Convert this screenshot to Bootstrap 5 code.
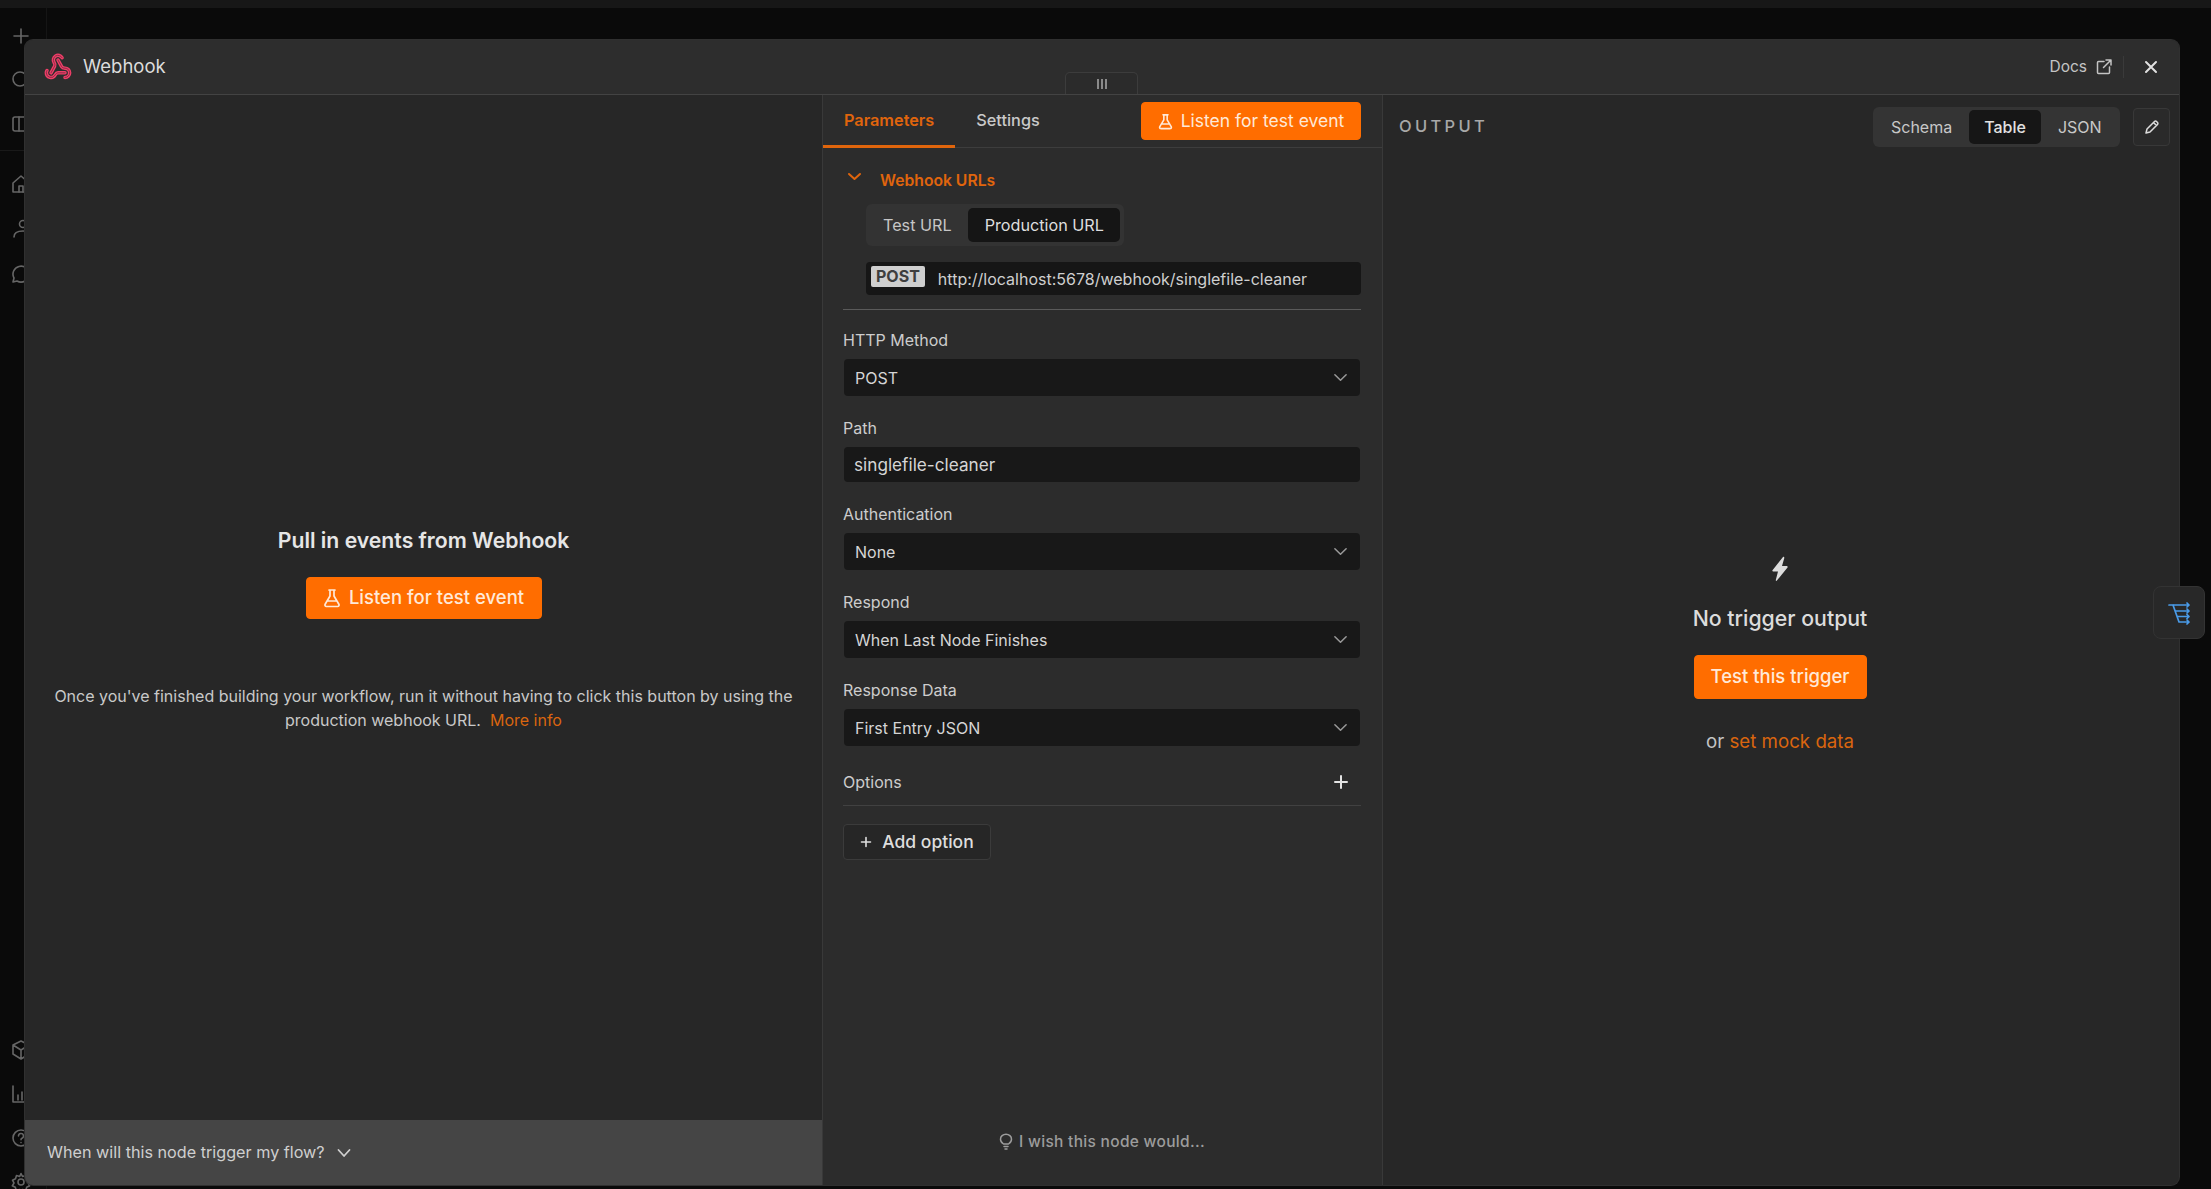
<!DOCTYPE html>
<html lang="en">
<head>
  <meta charset="UTF-8">
  <meta name="viewport" content="width=device-width, initial-scale=1.0">
  <title>Webhook</title>
  <link href="https://cdn.jsdelivr.net/npm/bootstrap@5.3.0/dist/css/bootstrap.min.css" rel="stylesheet">
  <style>
    html, body { height: 100%; }
    body {
      background-color: #0a0a0a;
      color: #d8d8d8;
      font-family: Inter, "Noto Sans", sans-serif;
      font-size: 15px;
      overflow: hidden;
      position: relative;
    }
    .top-strip { height: 8px; background: #171717; }

    /* app sidebar behind the modal */
    .app-side {
      position: absolute; left: 0; top: 8px; bottom: -3px; width: 47px;
      border-right: 1px solid #151515;
      color: #666;
      padding: 18px 0 0 11px;
    }
    .app-side svg { width: 20px; height: 20px; fill: none; stroke: currentColor; stroke-width: 1.6; stroke-linecap: round; stroke-linejoin: round; display: block; flex: none; }
    .side-group { gap: 24px; }
    .side-group-mid { gap: 25px; margin-top: 40px; }
    .side-rule { position: absolute; left: 0; right: 0; top: 142px; border-top: 1px solid #191919; }

    /* the node modal */
    .node-modal {
      position: absolute; left: 25px; top: 40px; width: 2154px; height: 1145px;
      background: #272727;
      border-radius: 8px;
      overflow: hidden;
      box-shadow: 0 0 0 1px #303030;
    }
    .modal-top {
      height: 55px; flex: none;
      background: #2d2d2d;
      border-bottom: 1px solid #434343;
      padding: 0 21px 0 19px;
      position: relative;
    }
    .node-title { font-size: 18.500px; color: #dcdcdc; margin-left: 11px; }
    .docs-link { font-size: 15.500px; color: #c4c4c4; text-decoration: none; }
    .top-sep { width: 1px; height: 22px; background: #3a3a3a; margin: 0 20px 0 10px; }
    .drag-handle {
      position: absolute; left: 1040px; bottom: 0; width: 73px; height: 22px;
      border: 1px solid #3c3c3c; border-bottom: 0; border-radius: 5px 5px 0 0;
      background: #2b2b2b;
    }
    .drag-handle span { width: 2px; height: 10px; background: #8a8a8a; margin: 0 1px; }

    .input-pane { width: 797px; flex: none; }
    .params-pane { width: 561px; flex: none; background: #2c2c2c; border-left: 1px solid #393939; border-right: 1px solid #393939; }
    .output-pane { flex: 1 1 auto; min-width: 0; }

    /* orange buttons */
    .btn-run {
      --bs-btn-bg: #ff6d00; --bs-btn-border-color: #ff6d00; --bs-btn-color: #ffe9d8;
      --bs-btn-hover-bg: #ff6d00; --bs-btn-hover-border-color: #ff6d00; --bs-btn-hover-color: #ffe9d8;
      font-size: 18.500px; font-weight: 500; border-radius: 4px; padding: 0;
    }
    .btn-listen { width: 236px; height: 42px; margin-top: 24px; }
    .btn-listen-sm { width: 220px; height: 38px; font-size: 17.500px; font-weight: 400; }
    .btn-test { width: 173px; height: 44px; }

    .pull-title { font-size: 21.200px; font-weight: 600; color: #e6e6e6; line-height: 26px; }
    .pull-note { font-size: 16px; line-height: 24px; color: #c9c9c9; width: 770px; margin-top: 65px; }
    .accent-link { color: #d9650f; text-decoration: none; }
    .input-center { padding-top: 432px; }
    .when-bar {
      height: 65px; flex: none; margin-top: auto; gap: 12px;
      background: #454545; color: #cfcfcf; font-size: 16.200px; padding-left: 22px;
    }

    /* parameter tabs */
    .params-head { height: 53px; flex: none; border-bottom: 1px solid #3d3d3d; padding-right: 21px; }
    .param-tabs .nav-link { color: #c9c9c9; font-size: 16.300px; font-weight: 500; padding: 0 21px; height: 53px; line-height: 50px; }
    .param-tabs .nav-link.active { color: #e0650c; border-bottom: 3px solid #e0650c; font-weight: 600; }
    .params-body { padding: 0 21px 0 20px; }
    .urls-title { color: #e0650c; font-size: 15.700px; font-weight: 600; line-height: 20px; margin-top: 23px; }
    .urls-chevron { margin: -9px 18px 0 4px; }
    .urls-wrap { margin-left: 23px; }
    .seg-control { background: #333; border-radius: 6px; padding: 4px 4px 4px 0; margin-top: 13px; }
    .seg-btn { border: 0; background: transparent; color: #c6c6c6; font-size: 16.200px; line-height: 34px; padding: 0 16px 0 17px; border-radius: 5px; }
    .seg-btn.on { background: #151515; color: #dedede; }
    .url-box { height: 33px; background: #161616; border-radius: 4px; margin-top: 16px; padding-left: 5px; }
    .method-tag { background: #cfcfcf; color: #3e3e3e; font-size: 16px; font-weight: 700; line-height: 21px; padding: 0 5px; border-radius: 2px; margin-top: -5px; }
    .url-text { font-size: 16px; color: #cfcfcf; margin-left: 13px; }
    .urls-rule { border-top: 1px solid #5a5a5a; margin-top: 14px; margin-bottom: 20px; }
    .field-group { margin-bottom: 22px; }
    .field-label { font-size: 16px; line-height: 20px; color: #cdcdcd; margin-bottom: 9px; display: block; }
    .field-select.form-select, .field-input.form-control {
      background-color: #181818; border: 0; border-radius: 4px; color: #d5d5d5;
      font-size: 16px; height: 37px; padding: 0 12px 0 11px; margin-left: 1px; width: calc(100% - 2px);
    }
    .field-select.form-select {
      background-image: url("data:image/svg+xml,%3csvg xmlns='http://www.w3.org/2000/svg' viewBox='0 0 16 16'%3e%3cpath fill='none' stroke='%23999' stroke-linecap='round' stroke-linejoin='round' stroke-width='1.6' d='m2 5 6 6 6-6'/%3e%3c/svg%3e");
      background-position: right 12px center; background-size: 15px 15px;
    }
    .field-input.form-control { font-size: 17.200px; height: 35px; padding-left: 10px; }
    .options-row { height: 42px; padding-bottom: 6px; border-bottom: 1px solid #414141; font-size: 16px; color: #cdcdcd; margin-top: 18px; padding-right: 12px; }
    .btn-add {
      --bs-btn-bg: #262626; --bs-btn-border-color: #3b3b3b; --bs-btn-color: #dedede;
      --bs-btn-hover-bg: #262626; --bs-btn-hover-border-color: #3b3b3b; --bs-btn-hover-color: #dedede;
      width: 148px; height: 36px; padding: 0; gap: 10px; font-size: 17.500px; font-weight: 500; border-radius: 4px; margin-top: 18px;
    }
    .wish-line { margin-top: auto; margin-bottom: 32px; gap: 6px; color: #9c9c9c; font-size: 15.500px; font-weight: 500; letter-spacing: .3px; }

    /* output */
    .output-head { padding: 10px 9px 0 16px; height: 53px; }
    .output-title { font-size: 16.500px; font-weight: 500; letter-spacing: 3.300px; color: #a8a8a8; }
    .view-switch { background: #343434; border-radius: 6px; padding: 3px; width: 247px; gap: 2px; }
    .view-btn { border: 0; background: transparent; color: #c8c8c8; font-size: 16px; line-height: 34px; padding: 0 15px; border-radius: 5px; }
    .view-btn.on { background: #161616; color: #e2e2e2; font-weight: 500; }
    .edit-btn { width: 37px; height: 38px; margin-left: 13px; border: 1px solid #383838; border-radius: 4px; background: #2a2a2a; }
    .output-center { padding: 408px 2px 0 0; }
    .empty-title { font-size: 21.300px; font-weight: 500; color: #dcdcdc; line-height: 26px; margin-top: 23px; margin-bottom: 24px; }
    .mock-line { font-size: 18.700px; color: #c4c4c4; margin-top: 30px; line-height: 26px; }

    .float-tools {
      position: absolute; left: 2153px; top: 586px; width: 52px; height: 53px;
      background: #282828; border: 1px solid #333; border-radius: 8px;
    }
  </style>
</head>
<body>
  <div class="top-strip"></div>

  <!-- app sidebar, mostly covered by the modal -->
  <div class="app-side d-flex flex-column">
    <div class="side-rule"></div>
    <div class="d-flex flex-column side-group">
      <svg viewBox="0 0 20 20"><path d="M10 3v14M3 10h14"/></svg>
      <svg viewBox="0 0 20 20"><circle cx="9" cy="9" r="7"/><path d="m14 14 4 4"/></svg>
      <svg viewBox="0 0 20 20"><rect x="2" y="3" width="16" height="14" rx="2"/><path d="M8 3v14"/></svg>
    </div>
    <div class="d-flex flex-column side-group-mid">
      <svg viewBox="0 0 20 20"><path d="M2 9l8-7 8 7v9H2z"/><path d="M8 18v-6h4v6"/></svg>
      <svg viewBox="0 0 20 20"><circle cx="12" cy="5" r="3.5"/><path d="M3 18c0-4 3-6 9-6s8 2 8 6"/></svg>
      <svg viewBox="0 0 20 20"><path d="M18 10a8 8 0 1 0-15 4l-1 4 4-1a8 8 0 0 0 12-7z"/></svg>
    </div>
    <div class="d-flex flex-column side-group mt-auto">
      <svg viewBox="0 0 20 20"><path d="M10 1l8 4v9l-8 5-8-5V5zM2 5l8 5 8-5M10 10v9"/></svg>
      <svg viewBox="0 0 20 20"><path d="M2 2v16h16M7 16v-5M11 16V8M15 16v-3"/></svg>
      <svg viewBox="0 0 20 20"><circle cx="10" cy="10" r="8"/><path d="M7.5 8a2.5 2.5 0 1 1 3.5 2.3c-.7.3-1 .8-1 1.5M10 14.5v.1"/></svg>
      <svg viewBox="0 0 20 20"><circle cx="10" cy="10" r="3"/><path d="M10 1.5l1.5 3 3.2-1 1 3.2 3 1.5-1.5 2.8 1.5 2.8-3 1.5-1 3.2-3.2-1-1.5 3-1.5-3-3.2 1-1-3.2-3-1.5L3 11 1.5 8.200l3-1.500 1-3.200 3.200 1z"/></svg>
    </div>
  </div>

  <div class="node-modal d-flex flex-column">
    <div class="modal-top d-flex align-items-center">
      <svg width="28" height="28" viewBox="0 0 24 24" fill="none" stroke-linecap="round" stroke-linejoin="round">
        <g stroke="#ee3f68" stroke-width="3">
          <path d="M18 16.98h-5.99c-1.100 0-1.950.94-2.480 1.900A4 4 0 0 1 2 17c.01-.7.2-1.400.57-2"/>
          <path d="m6 17 3.130-5.780c.53-.97.1-2.180-.5-3.100a4 4 0 1 1 6.890-4.060"/>
          <path d="m12 6 3.130 5.730C15.660 12.700 16.900 13 18 13a4 4 0 0 1 0 8"/>
        </g>
        <g stroke="#8a2a44" stroke-width=".8">
          <path d="M18 16.98h-5.99c-1.100 0-1.950.94-2.480 1.900A4 4 0 0 1 2 17c.01-.7.2-1.400.57-2"/>
          <path d="m6 17 3.130-5.780c.53-.97.1-2.180-.5-3.100a4 4 0 1 1 6.890-4.060"/>
          <path d="m12 6 3.130 5.730C15.660 12.700 16.900 13 18 13a4 4 0 0 1 0 8"/>
        </g>
      </svg>
      <span class="node-title">Webhook</span>
      <div class="drag-handle d-flex align-items-center justify-content-center"><span></span><span></span><span></span></div>
      <a class="docs-link ms-auto d-flex align-items-center gap-2" href="#">Docs
        <svg width="18" height="18" viewBox="0 0 18 18" fill="none" stroke="#c4c4c4" stroke-width="1.500" stroke-linecap="round" stroke-linejoin="round"><path d="M9 3.500H3.500a1 1 0 0 0-1 1v10a1 1 0 0 0 1 1h10a1 1 0 0 0 1-1V9M8.500 9.500 16 2M11 2h5v5"/></svg>
      </a>
      <div class="top-sep"></div>
      <svg width="14" height="14" viewBox="0 0 14 14" fill="none" stroke="#e0e0e0" stroke-width="2" stroke-linecap="round"><path d="M2 2l10 10M12 2 2 12"/></svg>
    </div>

    <div class="d-flex flex-grow-1" style="min-height:0">
      <!-- input pane -->
      <div class="input-pane d-flex flex-column align-items-center text-center">
        <div class="input-center d-flex flex-column align-items-center">
          <div class="pull-title">Pull in events from Webhook</div>
          <button class="btn btn-run btn-listen d-flex align-items-center justify-content-center gap-2" type="button">
            <svg width="18" height="20" viewBox="0 0 18 20" fill="none" stroke="#ffe9d8" stroke-width="1.700" stroke-linecap="round" stroke-linejoin="round"><path d="M6 2h6M7 2v6l-5 8.500A1.500 1.500 0 0 0 3.300 18.500h11.400a1.500 1.500 0 0 0 1.300-2L11 8V2M4.500 13h9"/></svg>
            Listen for test event
          </button>
          <div class="pull-note">Once you've finished building your workflow, run it without having to click this button by using the production webhook URL.&nbsp; <a class="accent-link" href="#">More info</a></div>
        </div>
        <div class="when-bar w-100 d-flex align-items-center">
          <span>When will this node trigger my flow?</span>
          <svg width="14" height="14" viewBox="0 0 14 14" fill="none" stroke="#cfcfcf" stroke-width="1.800" stroke-linecap="round" stroke-linejoin="round"><path d="m1.500 4 5.500 6 5.500-6"/></svg>
        </div>
      </div>

      <!-- parameters pane -->
      <div class="params-pane d-flex flex-column">
        <div class="params-head d-flex align-items-center justify-content-between">
          <ul class="nav param-tabs">
            <li class="nav-item"><a class="nav-link active" href="#">Parameters</a></li>
            <li class="nav-item"><a class="nav-link" href="#">Settings</a></li>
          </ul>
          <button class="btn btn-run btn-listen-sm d-flex align-items-center justify-content-center gap-2" type="button">
            <svg width="15" height="17" viewBox="0 0 18 20" fill="none" stroke="#ffe9d8" stroke-width="1.900" stroke-linecap="round" stroke-linejoin="round"><path d="M6 2h6M7 2v6l-5 8.500A1.500 1.500 0 0 0 3.300 18.500h11.400a1.500 1.500 0 0 0 1.300-2L11 8V2M4.500 13h9"/></svg>
            Listen for test event
          </button>
        </div>
        <div class="params-body d-flex flex-column flex-grow-1">
          <div class="urls-title d-flex align-items-center">
            <svg class="urls-chevron" width="15" height="10" viewBox="0 0 15 10" fill="none" stroke="#e0650c" stroke-width="2" stroke-linecap="round" stroke-linejoin="round"><path d="m2 2 5.500 5L13 2"/></svg>
            Webhook URLs
          </div>
          <div class="urls-wrap">
            <div class="seg-control d-inline-flex">
              <button class="seg-btn" type="button">Test URL</button>
              <button class="seg-btn on" type="button">Production URL</button>
            </div>
            <div class="url-box d-flex align-items-center">
              <span class="method-tag">POST</span>
              <span class="url-text">http://localhost:5678/webhook/singlefile-cleaner</span>
            </div>
          </div>
          <div class="urls-rule"></div>

          <div class="field-group">
            <label class="field-label">HTTP Method</label>
            <select class="form-select field-select"><option>POST</option></select>
          </div>
          <div class="field-group">
            <label class="field-label">Path</label>
            <input class="form-control field-input" type="text" value="singlefile-cleaner">
          </div>
          <div class="field-group">
            <label class="field-label">Authentication</label>
            <select class="form-select field-select"><option>None</option></select>
          </div>
          <div class="field-group">
            <label class="field-label">Respond</label>
            <select class="form-select field-select"><option>When Last Node Finishes</option></select>
          </div>
          <div class="field-group mb-0">
            <label class="field-label">Response Data</label>
            <select class="form-select field-select"><option>First Entry JSON</option></select>
          </div>

          <div class="options-row d-flex align-items-center justify-content-between">
            <span>Options</span>
            <svg width="16" height="16" viewBox="0 0 16 16" fill="none" stroke="#e4e4e4" stroke-width="2" stroke-linecap="round"><path d="M8 2v12M2 8h12"/></svg>
          </div>
          <div>
            <button class="btn btn-add d-inline-flex align-items-center justify-content-center" type="button">
              <svg width="12" height="12" viewBox="0 0 12 12" fill="none" stroke="#dedede" stroke-width="1.600" stroke-linecap="round"><path d="M6 1.500v9M1.500 6h9"/></svg>
              Add option
            </button>
          </div>

          <div class="wish-line d-flex align-items-center justify-content-center">
            <svg width="14" height="17" viewBox="0 0 14 17" fill="none" stroke="#9c9c9c" stroke-width="1.500" stroke-linecap="round" stroke-linejoin="round"><path d="M4.500 11C3 10 1.500 8.500 1.500 6.200a5.500 5 0 0 1 11 0c0 2.300-1.500 3.800-3 4.800zM5 13.500h4M6 16h2"/></svg>
            <span>I wish this node would...</span>
          </div>
        </div>
      </div>

      <!-- output pane -->
      <div class="output-pane d-flex flex-column">
        <div class="output-head d-flex align-items-center justify-content-between">
          <span class="output-title">OUTPUT</span>
          <div class="d-flex align-items-center">
            <div class="view-switch d-flex">
              <button class="view-btn" type="button">Schema</button>
              <button class="view-btn on" type="button">Table</button>
              <button class="view-btn" type="button">JSON</button>
            </div>
            <div class="edit-btn d-flex align-items-center justify-content-center">
              <svg width="16" height="16" viewBox="0 0 16 16" fill="none" stroke="#dcdcdc" stroke-width="1.500" stroke-linejoin="round"><path d="M2 14l1-4 7.500-7.500a1.400 1.400 0 0 1 2 0l1 1a1.400 1.400 0 0 1 0 2L6 13zM9.500 3.500l3 3"/></svg>
            </div>
          </div>
        </div>
        <div class="output-center d-flex flex-column align-items-center">
          <svg width="20" height="26" viewBox="0 0 20 26"><path fill="#dcdcdc" d="M13 1 2.500 14.200a.8.8 0 0 0 .6 1.300H8L5.800 24c-.2.800.6 1.200 1.100.6L17.500 11.400a.8.800 0 0 0-.6-1.300H12L14.300 2c.2-.9-.7-1.500-1.300-1z"/></svg>
          <div class="empty-title">No trigger output</div>
          <button class="btn btn-run btn-test" type="button">Test this trigger</button>
          <div class="mock-line">or <a class="accent-link" href="#">set mock data</a></div>
        </div>
      </div>
    </div>
  </div>

  <div class="float-tools d-flex align-items-center justify-content-center">
    <svg width="24" height="24" viewBox="0 0 24 24" fill="none" stroke="#4a9be8" stroke-width="1.700" stroke-linecap="round" stroke-linejoin="round"><path d="M2 4h20M6 4l6 17h10M9 10h13M11 15.500h11M20 2l2 2-2 2M20 8l2 2-2 2M20 13.500l2 2-2 2M20 19l2 2-2 2"/></svg>
  </div>

  <script src="https://cdn.jsdelivr.net/npm/bootstrap@5.3.0/dist/js/bootstrap.bundle.min.js"></script>
</body>
</html>
